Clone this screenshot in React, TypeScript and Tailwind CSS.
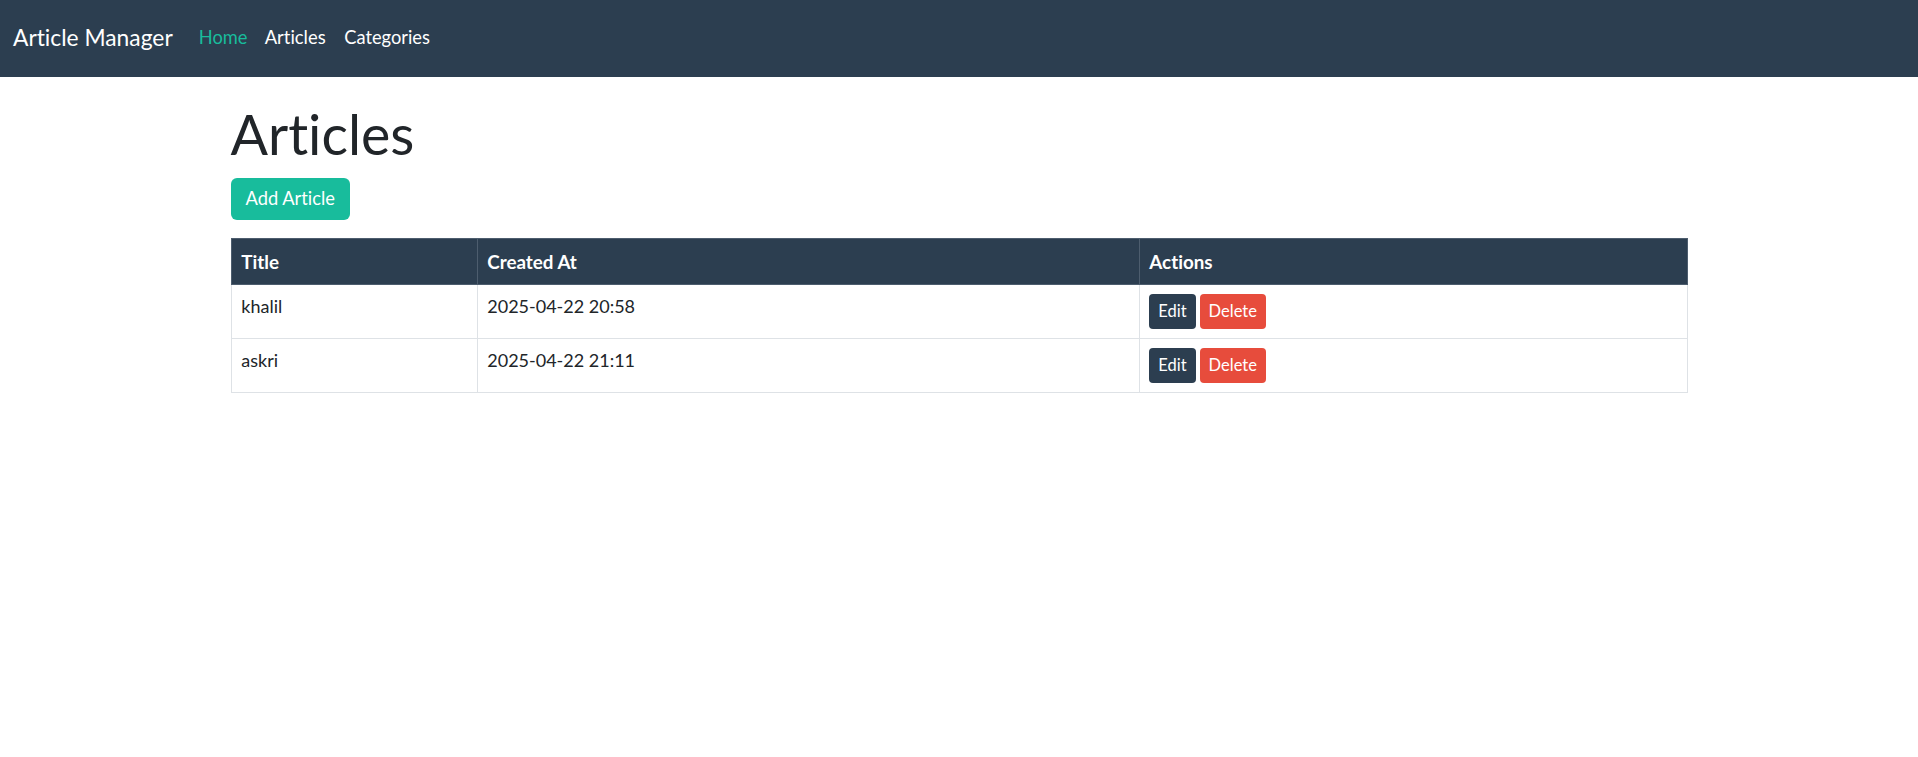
import React from 'react'

const articles = [
  { id: 1, title: 'khalil', createdAt: '2025-04-22 20:58' },
  { id: 2, title: 'askri', createdAt: '2025-04-22 21:11' },
]

function Navbar() {
  return (
    <nav className="flex h-[77px] items-center bg-[#2c3e50] pb-[2px] pl-[13px]">
      <a className="mr-[17.5px] text-[22.8px] leading-none text-white">Article Manager</a>
      <ul className="flex items-center">
        <li>
          <a className="px-[8.6px] text-[18.3px] leading-none text-[#18bc9c]">Home</a>
        </li>
        <li>
          <a className="px-[8.6px] text-[18.4px] leading-none text-white">Articles</a>
        </li>
        <li>
          <a className="pl-[10px] pr-[8.6px] text-[18.3px] leading-none text-white">Categories</a>
        </li>
      </ul>
    </nav>
  )
}

export default function App() {
  return (
    <div
      className="min-h-screen bg-white text-[#212529] [font-variant-ligatures:none]"
      style={{ fontFamily: 'Lato, "Open Sans", sans-serif' }}
    >
      <Navbar />

      <main className="mx-auto w-[1457px] pt-[24px]">
        <h1 className="mb-[10px] text-[55.5px] font-normal leading-[1.2]">Articles</h1>
        <button className="h-[42px] rounded-[6px] bg-[#18bc9c] px-[15px] text-[18.3px] text-white">
          Add Article
        </button>

        <table className="mt-[18.5px] w-full border-collapse border border-[#dee2e6] text-[18px]">
          <thead>
            <tr className="h-[46px] bg-[#2c3e50] text-left text-[18.8px] text-white">
              <th className="w-[246px] border border-[#4d5d6e] px-[9.8px] font-bold">Title</th>
              <th className="w-[662px] border border-[#4d5d6e] px-[9.8px] font-bold">Created At</th>
              <th className="border border-[#4d5d6e] px-[9.8px] font-bold">Actions</th>
            </tr>
          </thead>
          <tbody>
            {articles.map((a) => (
              <tr key={a.id} className="h-[54px]">
                <td className="border border-[#dee2e6] px-[9.8px] pt-[8px] align-top leading-[1.5]">{a.title}</td>
                <td className="border border-[#dee2e6] px-[9.8px] pt-[8px] align-top leading-[1.5]">{a.createdAt}</td>
                <td className="border border-[#dee2e6] px-[9.8px] align-middle">
                  <div className="flex gap-[4px]">
                    <button className="h-[35px] rounded-[4px] bg-[#2c3e50] px-[9px] text-[16.5px] text-white">Edit</button>
                    <button className="h-[35px] rounded-[4px] bg-[#e74c3c] px-[9px] text-[16.5px] text-white">Delete</button>
                  </div>
                </td>
              </tr>
            ))}
          </tbody>
        </table>
      </main>
    </div>
  )
}
